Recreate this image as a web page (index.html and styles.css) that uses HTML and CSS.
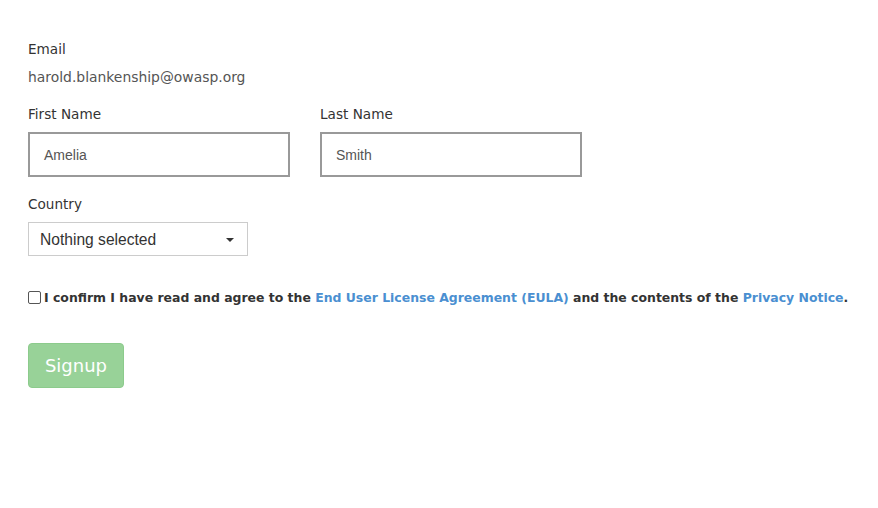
FILE: index.html
```html
<!DOCTYPE html>
<html>
<head>
<meta charset="utf-8">
<link rel="stylesheet" href="styles.css">
</head>
<body>
<div class="page">
  <div class="field">
    <div class="label">Email</div>
    <div class="value">harold.blankenship@owasp.org</div>
  </div>
  <div class="row">
    <div class="field">
      <div class="label">First Name</div>
      <div class="input">Amelia</div>
    </div>
    <div class="field">
      <div class="label">Last Name</div>
      <div class="input">Smith</div>
    </div>
  </div>
  <div class="field">
    <div class="label">Country</div>
    <div class="select"><span>Nothing selected</span><span class="caret"></span></div>
  </div>
  <div class="confirm">
    <span class="check"></span>
    <span class="confirm-text">I confirm I have read and agree to the <a>End User License Agreement (EULA)</a> and the contents of the <a>Privacy Notice</a>.</span>
  </div>
  <div class="btn">Signup</div>
</div>
</body>
</html>
```

FILE: styles.css
```css
html, body { margin: 0; padding: 0; background: #fff; }
body { font-family: "DejaVu Sans", sans-serif; color: #333; }
.page { padding: 40px 28px; display: flex; flex-direction: column; }
.field { display: flex; flex-direction: column; }
.label { font-size: 13.6px; line-height: 18px; color: #333; }
.value { font-size: 13.9px; line-height: 18px; color: #555; margin-top: 10px; margin-bottom: 19px; }
.row { display: flex; gap: 30px; }
.row .label { margin-bottom: 9px; }
.input { box-sizing: border-box; width: 262px; height: 45px; border: 2px solid #999; padding: 0 14px; display: flex; align-items: center; font-family: "Liberation Sans", Arial, sans-serif; font-size: 14px; color: #555; margin-bottom: 18px; }
.select { box-sizing: border-box; width: 220px; height: 34px; border: 1px solid #ccc; margin-top: 9px; padding: 1px 12px 0 11px; display: flex; align-items: center; justify-content: space-between; font-family: "Liberation Sans", Arial, sans-serif; font-size: 15.6px; color: #333; }
.caret { width: 0; height: 0; border-left: 4px solid transparent; border-right: 4px solid transparent; border-top: 4px solid #333; margin-right: 1px; }
.confirm { display: flex; align-items: center; margin-top: 34px; }
.check { flex-shrink: 0; box-sizing: border-box; width: 13px; height: 13px; border: 1px solid #555; border-radius: 2px; margin-right: 3px; }
.confirm-text { font-size: 12.45px; font-weight: bold; color: #333; white-space: nowrap; }
.confirm-text a { color: #4a8fd1; }
.btn { margin-top: 38px; width: 96px; height: 45px; box-sizing: border-box; background: #98d298; border: 1px solid #8ccb8c; border-radius: 4px; color: #fff; font-size: 18px; display: flex; align-items: center; justify-content: center; }
```
